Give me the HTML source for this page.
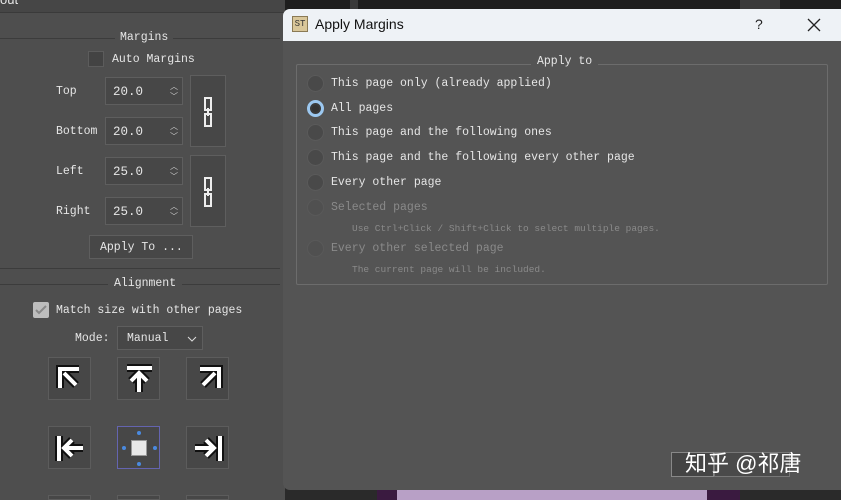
<!DOCTYPE html><html><head><meta charset="utf-8"><style>
*{margin:0;padding:0;box-sizing:border-box}
html{width:841px;height:500px;overflow:hidden}
body{width:841px;height:500px;overflow:hidden;background:#2b2b2b;position:relative;font-family:"Liberation Mono",monospace;font-size:11.5px;color:#e6e6e6}
.a{position:absolute}
.t{position:absolute;white-space:nowrap;line-height:14px}
.spin{position:absolute;width:78px;height:28px;background:#474747;border:1px solid #5e5e5e}
.spin span{position:absolute;left:7px;top:7px;font-size:12.5px}
.spin i{position:absolute;right:4px;font-style:normal;font-size:8px;color:#ccc}
.btn{position:absolute;background:#474747;border:1px solid #5e5e5e}
.ab{position:absolute;width:43px;height:43px;background:#474747;border:1px solid #5c5c5c}
.r{position:absolute;width:17px;height:17px;border-radius:50%;background:#494949;border:1px solid #5a5a5a}
</style></head><body>
<div class="a" style="left:283px;top:0;width:558px;height:10px;background:#1e1e1e"></div>
<div class="a" style="left:350px;top:0;width:8px;height:10px;background:#3a3a3a"></div>
<div class="a" style="left:740px;top:0;width:40px;height:10px;background:#3a3a3a"></div>
<div class="a" style="left:283px;top:489px;width:558px;height:11px;background:#2a2a2a"></div>
<div class="a" style="left:377px;top:489px;width:363px;height:11px;background:#3a1a40"></div>
<div class="a" style="left:397px;top:489px;width:310px;height:11px;background:#b8a0c6"></div>
<div class="a" style="left:0;top:0;width:285px;height:500px;background:#4e4e4e"></div>
<div class="a" style="left:0;top:0;width:285px;height:13px;background:#464646;border-bottom:1px solid #3a3a3a"></div>
<div class="t" style="left:0;top:-7px;font-family:'Liberation Sans';font-size:13px">out</div>
<div class="a" style="left:0;top:38px;width:280px;height:1px;background:#3c3c3c"></div>
<div class="t" style="left:115px;top:31px;background:#4e4e4e;padding:0 5px">Margins</div>
<div class="a" style="left:88px;top:51px;width:16px;height:16px;background:#434343;border:1px solid #5c5c5c"></div>
<div class="t" style="left:112px;top:53px">Auto Margins</div>
<div class="t" style="left:56px;top:85px">Top</div>
<div class="t" style="left:56px;top:125px">Bottom</div>
<div class="t" style="left:56px;top:165px">Left</div>
<div class="t" style="left:56px;top:205px">Right</div>
<div class="spin" style="left:105px;top:77px"><span>20.0</span><i style="top:3px">︿</i><i style="top:13px">﹀</i></div>
<div class="spin" style="left:105px;top:117px"><span>20.0</span><i style="top:3px">︿</i><i style="top:13px">﹀</i></div>
<div class="spin" style="left:105px;top:157px"><span>25.0</span><i style="top:3px">︿</i><i style="top:13px">﹀</i></div>
<div class="spin" style="left:105px;top:197px"><span>25.0</span><i style="top:3px">︿</i><i style="top:13px">﹀</i></div>
<div class="btn" style="left:190px;top:75px;width:36px;height:72px"><svg class="a" style="left:11px;top:20px" width="12" height="32"><rect x="3" y="2" width="6" height="12" fill="none" stroke="#eee" stroke-width="2"/><rect x="3" y="18" width="6" height="12" fill="none" stroke="#eee" stroke-width="2"/><line x1="6" y1="12" x2="6" y2="20" stroke="#eee" stroke-width="2"/></svg></div>
<div class="btn" style="left:190px;top:155px;width:36px;height:72px"><svg class="a" style="left:11px;top:20px" width="12" height="32"><rect x="3" y="2" width="6" height="12" fill="none" stroke="#eee" stroke-width="2"/><rect x="3" y="18" width="6" height="12" fill="none" stroke="#eee" stroke-width="2"/><line x1="6" y1="12" x2="6" y2="20" stroke="#eee" stroke-width="2"/></svg></div>
<div class="btn" style="left:89px;top:235px;width:104px;height:24px"><span class="t" style="left:10px;top:5px">Apply To ...</span></div>
<div class="a" style="left:0;top:268px;width:280px;height:1px;background:#3c3c3c"></div>
<div class="a" style="left:0;top:284px;width:280px;height:1px;background:#3c3c3c"></div>
<div class="t" style="left:108px;top:277px;background:#4e4e4e;padding:0 6px">Alignment</div>
<div class="a" style="left:33px;top:302px;width:16px;height:16px;background:#bdbdbd;border-radius:2px"><svg width="16" height="16"><path d="M3 8l3 3 7-7" stroke="#888" stroke-width="2" fill="none"/></svg></div>
<div class="t" style="left:56px;top:304px">Match size with other pages</div>
<div class="t" style="left:75px;top:332px">Mode:</div>
<div class="btn" style="left:117px;top:326px;width:86px;height:24px"><span class="t" style="left:9px;top:5px">Manual</span><svg class="a" style="left:69px;top:9px" width="10" height="7"><path d="M1 1l4 4 4-4" stroke="#ddd" fill="none"/></svg></div>
<div class="ab" style="left:48px;top:357px"><svg width="43" height="43"><path d="M11 30V11h19M15 15l12 12" stroke="#111" stroke-width="8" fill="none"/><path d="M11 30V11h19M15 15l12 12" stroke="#fff" stroke-width="4" fill="none"/></svg></div>
<div class="ab" style="left:117px;top:357px"><svg width="43" height="43"><path d="M9 10h25M21 15v19M13 23l8-8 8 8" stroke="#111" stroke-width="8" fill="none"/><path d="M9 10h25M21 15v19M13 23l8-8 8 8" stroke="#fff" stroke-width="4" fill="none"/></svg></div>
<div class="ab" style="left:186px;top:357px"><svg width="43" height="43"><path d="M13 11h19v19M28 15L16 27" stroke="#111" stroke-width="8" fill="none"/><path d="M13 11h19v19M28 15L16 27" stroke="#fff" stroke-width="4" fill="none"/></svg></div>
<div class="ab" style="left:48px;top:426px"><svg width="43" height="43"><path d="M10 9v25M15 21h19M23 13l-8 8 8 8" stroke="#111" stroke-width="8" fill="none"/><path d="M10 9v25M15 21h19M23 13l-8 8 8 8" stroke="#fff" stroke-width="4" fill="none"/></svg></div>
<div class="ab" style="left:117px;top:426px;border-color:#6464b0"><div class="a" style="left:13px;top:13px;width:16px;height:16px;background:#e8e8e8;border:1px solid #999"></div><div class="a" style="left:19px;top:4px;width:4px;height:4px;background:#4a8ae0;border-radius:50%"></div><div class="a" style="left:19px;top:35px;width:4px;height:4px;background:#4a8ae0;border-radius:50%"></div><div class="a" style="left:4px;top:19px;width:4px;height:4px;background:#4a8ae0;border-radius:50%"></div><div class="a" style="left:35px;top:19px;width:4px;height:4px;background:#4a8ae0;border-radius:50%"></div></div>
<div class="ab" style="left:186px;top:426px"><svg width="43" height="43"><path d="M33 9v25M8 21h19M19 13l8 8-8 8" stroke="#111" stroke-width="8" fill="none"/><path d="M33 9v25M8 21h19M19 13l8 8-8 8" stroke="#fff" stroke-width="4" fill="none"/></svg></div>
<div class="ab" style="left:48px;top:495px;height:5px"></div><div class="ab" style="left:117px;top:495px;height:5px"></div><div class="ab" style="left:186px;top:495px;height:5px"></div>
<div class="a" style="left:283px;top:9px;width:558px;height:481px;background:#545454;border-radius:7px 0 0 7px;overflow:hidden">
<div class="a" style="left:0;top:0;width:558px;height:32px;background:#eef2f6"></div>
<div class="a" style="left:9px;top:7px;width:16px;height:16px;background:#d9c79a;border:1px solid #8a7a55;font-size:9px;color:#333;line-height:14px;text-align:center">ST</div>
<div class="t" style="left:32px;top:8px;font-family:'Liberation Sans';font-size:14px;color:#111">Apply Margins</div>
<div class="t" style="left:472px;top:8px;font-family:'Liberation Sans';font-size:14px;color:#222">?</div>
<svg class="a" style="left:524px;top:9px" width="14" height="14"><path d="M1 1l12 12M13 1L1 13" stroke="#222" stroke-width="1.3"/></svg>
<div class="a" style="left:13px;top:55px;width:532px;height:221px;border:1px solid #6c6c6c;border-radius:2px"></div>
<div class="t" style="left:248px;top:46px;background:#545454;padding:0 6px">Apply to</div>
</div>
<div class="r" style="left:307px;top:75px"></div><div class="t" style="left:331px;top:77px">This page only (already applied)</div>
<div class="r" style="left:307px;top:100px;background:#3a3a3a;border:3px solid #9cc8f0"></div><div class="a" style="left:312px;top:105px;width:7px;height:7px;border-radius:50%;background:#333"></div><div class="t" style="left:331px;top:102px">All pages</div>
<div class="r" style="left:307px;top:124px"></div><div class="t" style="left:331px;top:126px">This page and the following ones</div>
<div class="r" style="left:307px;top:149px"></div><div class="t" style="left:331px;top:151px">This page and the following every other page</div>
<div class="r" style="left:307px;top:174px"></div><div class="t" style="left:331px;top:176px">Every other page</div>
<div class="r" style="left:307px;top:199px;background:#505050;border-color:#595959"></div><div class="t" style="left:331px;top:201px;color:#8a8a8a">Selected pages</div>
<div class="t" style="left:352px;top:222px;color:#8a8a8a;font-size:9.5px">Use Ctrl+Click / Shift+Click to select multiple pages.</div>
<div class="r" style="left:307px;top:240px;background:#505050;border-color:#595959"></div><div class="t" style="left:331px;top:242px;color:#8a8a8a">Every other selected page</div>
<div class="t" style="left:352px;top:263px;color:#8a8a8a;font-size:9.5px">The current page will be included.</div>
<div class="a" style="left:671px;top:452px;width:43px;height:25px;background:#444;border:1px solid #888"></div>
<div class="a" style="left:714px;top:452px;width:76px;height:25px;background:#4a4a4a;border:1px solid #777"></div>
<div class="t" style="left:685px;top:450px;font-family:'Liberation Sans','Noto Sans CJK SC',sans-serif;font-size:22px;line-height:28px;color:#fff">知乎 @祁唐</div>
</body></html>
